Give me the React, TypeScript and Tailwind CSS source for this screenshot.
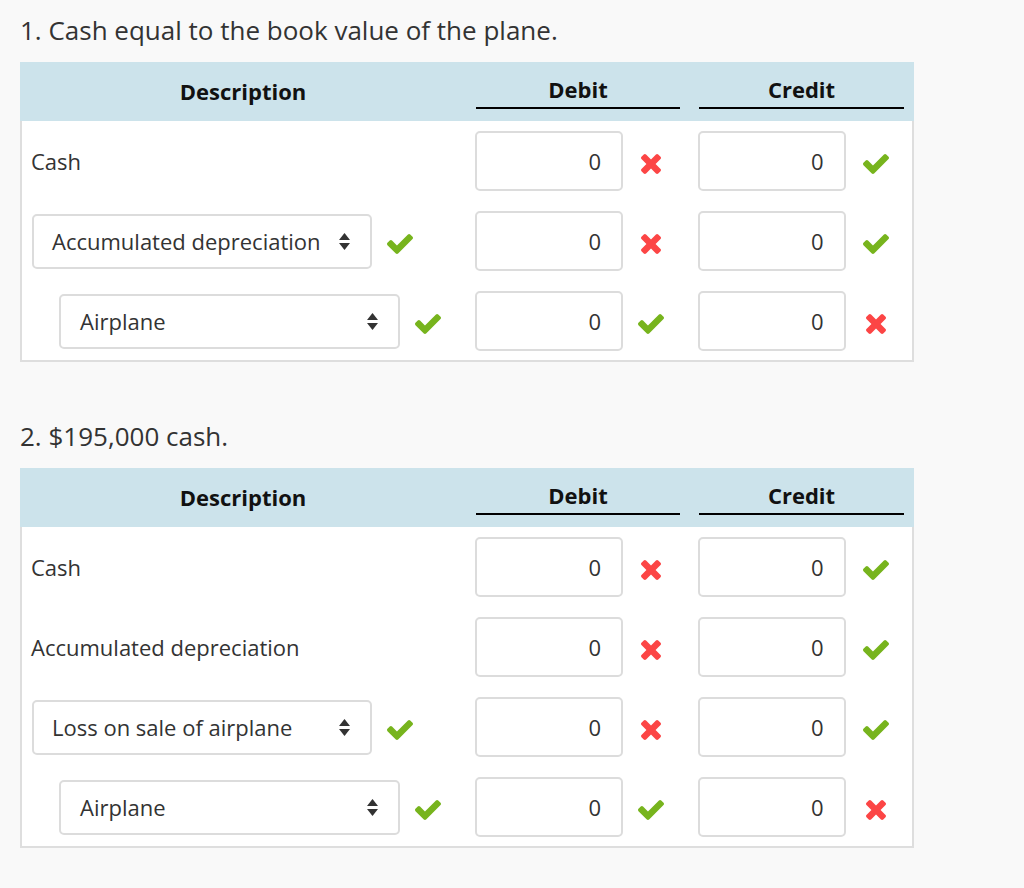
import React from 'react';

type Mark = 'ok' | 'bad';

interface Row {
  kind: 'text' | 'select';
  label: string;
  indent?: boolean;
  debit: Mark;
  credit: Mark;
}

const entries: { title: string; rows: Row[] }[] = [
  {
    title: '1. Cash equal to the book value of the plane.',
    rows: [
      { kind: 'text', label: 'Cash', debit: 'bad', credit: 'ok' },
      { kind: 'select', label: 'Accumulated depreciation', debit: 'bad', credit: 'ok' },
      { kind: 'select', label: 'Airplane', indent: true, debit: 'ok', credit: 'bad' },
    ],
  },
  {
    title: '2. $195,000 cash.',
    rows: [
      { kind: 'text', label: 'Cash', debit: 'bad', credit: 'ok' },
      { kind: 'text', label: 'Accumulated depreciation', debit: 'bad', credit: 'ok' },
      { kind: 'select', label: 'Loss on sale of airplane', debit: 'bad', credit: 'ok' },
      { kind: 'select', label: 'Airplane', indent: true, debit: 'ok', credit: 'bad' },
    ],
  },
];

function CheckIcon() {
  return (
    <svg width="26" height="20" viewBox="121 334 1550 1188" fill="#77b41d">
      <path d="M1671 566q0 40-28 68l-724 724-136 136q-28 28-68 28t-68-28l-136-136-362-362q-28-28-28-68t28-68l136-136q28-28 68-28t68 28l294 295 656-657q28-28 68-28t68 28l136 136q28 28 28 68z" />
    </svg>
  );
}

function CrossIcon() {
  return (
    <svg width="20" height="20" viewBox="302 366 1188 1188" fill="#fc4545">
      <path d="M1490 1322q0 40-28 68l-136 136q-28 28-68 28t-68-28l-294-294-294 294q-28 28-68 28t-68-28l-136-136q-28-28-28-68t28-68l294-294-294-294q-28-28-28-68t28-68l136-136q28-28 68-28t68 28l294 294 294-294q28-28 68-28t68 28l136 136q28 28 28 68t-28 68l-294 294 294 294q28 28 28 68z" />
    </svg>
  );
}

function MarkIcon({ mark }: { mark: Mark }) {
  return (
    <div className="w-[28px] h-[20px] mt-[6px] flex items-center justify-center">
      {mark === 'ok' ? <CheckIcon /> : <CrossIcon />}
    </div>
  );
}

function SortArrows() {
  return (
    <svg width="11" height="17" viewBox="0 0 11 17" fill="#333">
      <path d="M0 7 L5.5 0 L11 7 Z" />
      <path d="M0 10 L11 10 L5.5 17 Z" />
    </svg>
  );
}

function AmountCell({ mark, gap }: { mark: Mark; gap: string }) {
  return (
    <div className="flex items-center">
      <div className="w-[148px] h-[60px] bg-white border-2 border-[#dcdcdc] rounded-[5px] flex items-center justify-end pr-5 text-[22px] text-[#333]">
        0
      </div>
      <div className={gap}>
        <MarkIcon mark={mark} />
      </div>
    </div>
  );
}

function EntryTable({ rows }: { rows: Row[] }) {
  return (
    <div className="w-[894px]">
      <div className="h-[59px] bg-[#cce3eb] flex text-[22px] font-bold text-[#111]">
        <div className="w-[446px] flex items-center justify-center">Description</div>
        <div className="w-[224px] pl-[10px] pr-[10px] flex flex-col justify-end pb-[12px]">
          <div className="leading-[28px] pb-1 border-b-2 border-black text-center">Debit</div>
        </div>
        <div className="w-[224px] pl-[9px] pr-[10px] flex flex-col justify-end pb-[12px]">
          <div className="leading-[28px] pb-1 border-b-2 border-black text-center">Credit</div>
        </div>
      </div>
      <div className="bg-white border-2 border-t-0 border-[#dedede] pt-[10px] pb-[9px] flex flex-col gap-5">
        {rows.map((row, i) => (
          <div key={i} className="flex items-center h-[60px]">
            <div className="w-[444px] pl-[9px] flex items-center">
              {row.kind === 'text' ? (
                <span className="text-[22px] text-[#333]">{row.label}</span>
              ) : (
                <>
                  <div
                    className={
                      row.indent
                        ? 'ml-[28px] w-[341px] h-[55px] bg-white border-2 border-[#dcdcdc] rounded-[5px] flex items-center justify-between pl-[19px] pr-[20px] text-[22px] text-[#333]'
                        : 'ml-[1px] w-[340px] h-[55px] bg-white border-2 border-[#dcdcdc] rounded-[5px] flex items-center justify-between pl-[18px] pr-[20px] text-[22px] text-[#333]'
                    }
                  >
                    <span>{row.label}</span>
                    <SortArrows />
                  </div>
                  <div className="ml-[14px] -mt-[1px]">
                    <MarkIcon mark="ok" />
                  </div>
                </>
              )}
            </div>
            <div className="w-[224px] pl-[10px]">
              <AmountCell mark={row.debit} gap="ml-[14px]" />
            </div>
            <div className="w-[224px] pl-[9px]">
              <AmountCell mark={row.credit} gap="ml-[16px]" />
            </div>
          </div>
        ))}
      </div>
    </div>
  );
}

export default function App() {
  return (
    <div className="min-h-screen bg-[#f9f9f9] pl-5 pt-[14px] font-['Open_Sans',sans-serif]">
      {entries.map((entry, i) => (
        <div key={i} className="mb-[58px]">
          <h2 className="text-[26px] leading-[32px] text-[#333] mb-4">{entry.title}</h2>
          <EntryTable rows={entry.rows} />
        </div>
      ))}
    </div>
  );
}
